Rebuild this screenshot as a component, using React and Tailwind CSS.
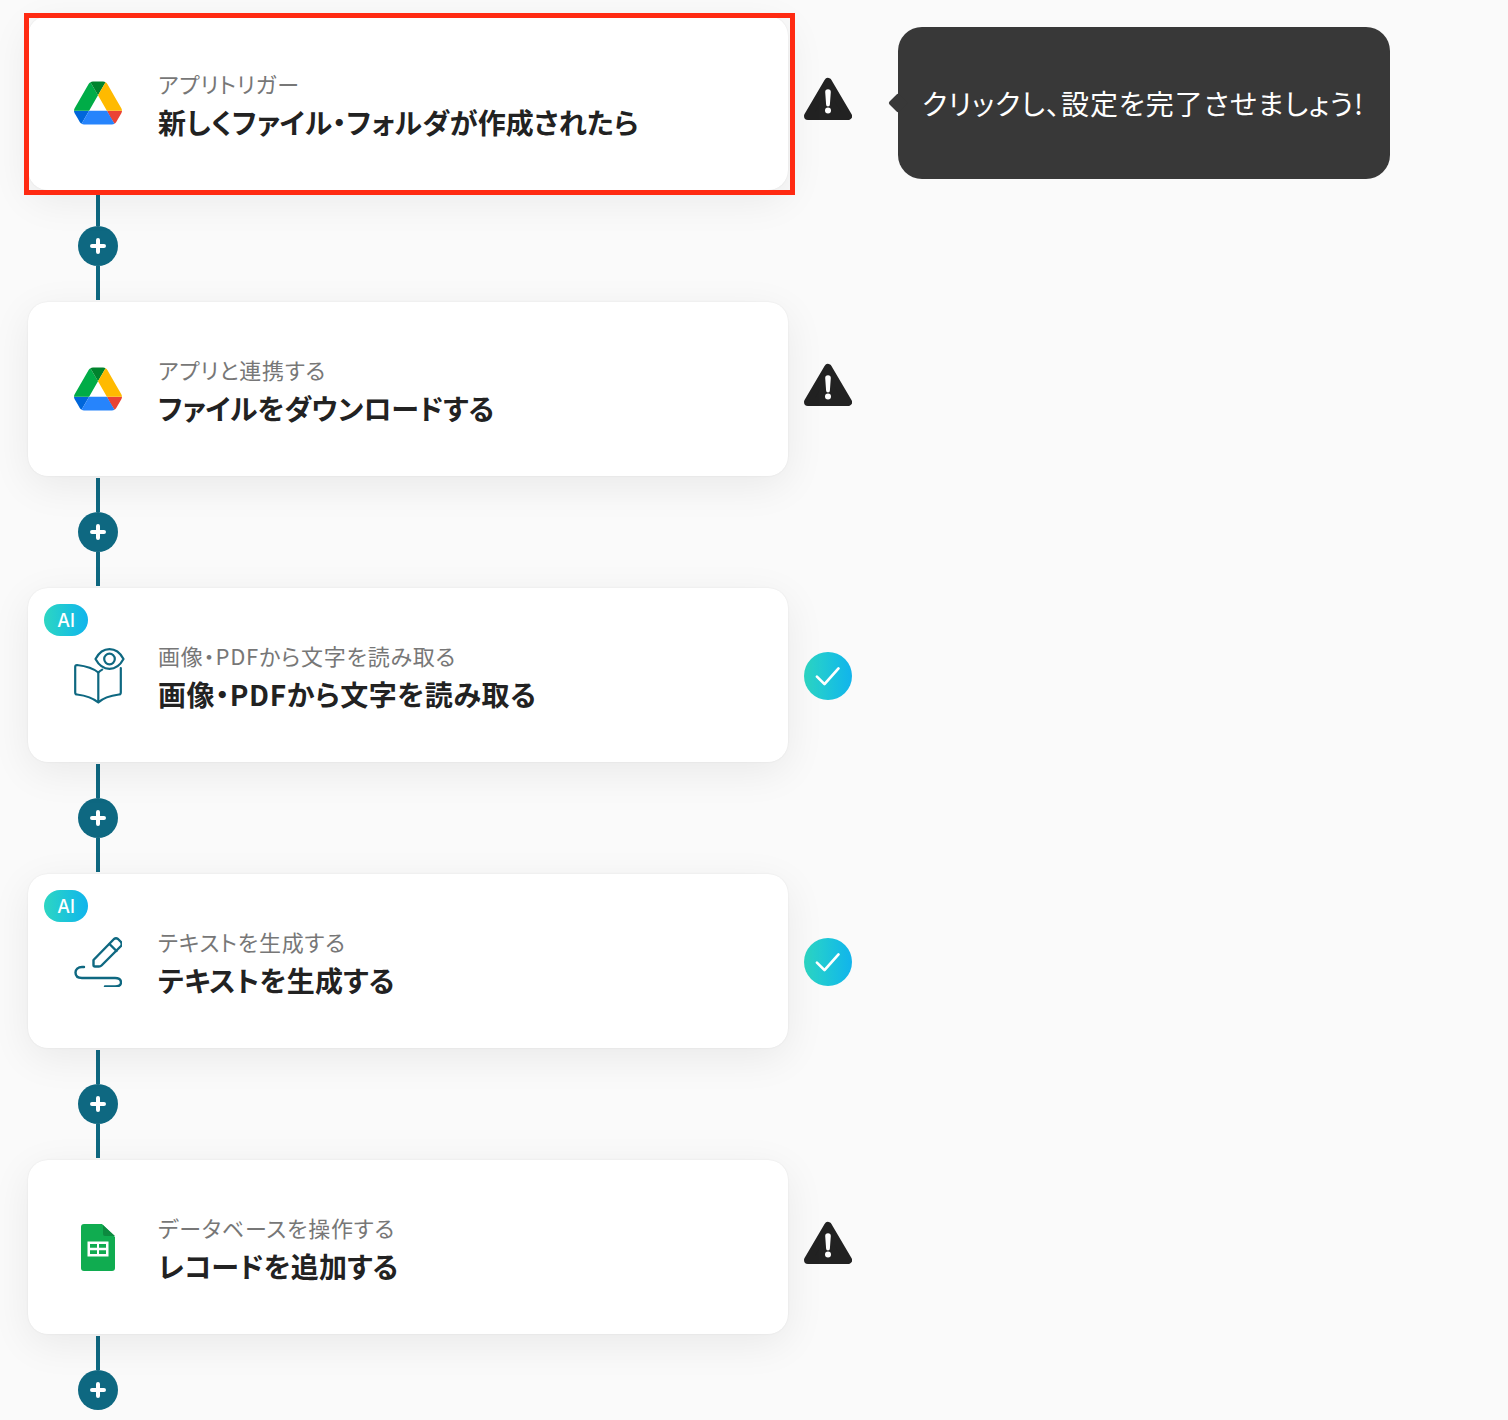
const fontFamily = "font-['Noto_Sans_CJK_JP','Noto_Sans',sans-serif]";

const DriveIcon = () => (
  <svg viewBox="0 0 87.3 78" className="w-[49px] h-[44px]">
    <path d="m6.6 66.85 3.85 6.65c.8 1.4 1.95 2.5 3.3 3.3l13.75-23.8h-27.5c0 1.55.4 3.1 1.2 4.5z" fill="#0066da" />
    <path d="m43.65 25-13.75-23.8c-1.35.8-2.5 1.9-3.3 3.3l-25.4 44a9.06 9.06 0 0 0 -1.2 4.5h27.5z" fill="#00ac47" />
    <path d="m73.55 76.8c1.35-.8 2.5-1.9 3.3-3.3l1.6-2.75 7.65-13.25c.8-1.4 1.2-2.95 1.2-4.5h-27.502l5.852 11.5z" fill="#ea4335" />
    <path d="m43.65 25 13.75-23.8c-1.35-.8-2.9-1.2-4.5-1.2h-18.5c-1.6 0-3.15.45-4.5 1.2z" fill="#00832d" />
    <path d="m59.8 53h-32.3l-13.75 23.8c1.35.8 2.9 1.2 4.5 1.2h50.8c1.6 0 3.15-.45 4.5-1.2z" fill="#2684fc" />
    <path d="m73.4 26.5-12.7-22c-.8-1.4-1.95-2.5-3.3-3.3l-13.75 23.8 16.15 28h27.45c0-1.55-.4-3.1-1.2-4.5z" fill="#ffba00" />
  </svg>
);

const BookEyeIcon = () => (
  <svg viewBox="0 0 48 56" className="w-[48px] h-[56px] overflow-visible" fill="none" stroke="#0e6881" strokeWidth="2.2" strokeLinecap="round" strokeLinejoin="round">
    <path d="M24.3 55.5 V25.5 C19 21 11 19 3 18 Q1.2 18 1.2 20 V45.5 Q1.2 47.5 3 47.5 C11 48.5 19 51 24.3 55.5 C29 51 37 48.5 45 47.5 Q46.8 47.5 46.8 45.5 V21" />
    <path d="M24.3 25.5 C25.5 24.3 26.8 23.4 28.2 22.6" />
    <path d="M21.5 12 C25 5.5 30 2.2 35.5 2.2 C41 2.2 46 5.5 49.5 12 C46 18.5 41 21.8 35.5 21.8 C30 21.8 25 18.5 21.5 12 Z" />
    <circle cx="35.5" cy="12" r="5.3" />
  </svg>
);

const PenIcon = () => (
  <svg viewBox="0 0 48 52" className="w-[48px] h-[52px]" fill="none" stroke="#0e6881" strokeWidth="2.4" strokeLinecap="round" strokeLinejoin="round">
    <path d="M19.5 25 L40 4 Q42 2.5 44 4 L47 7 Q48.5 9 47 11 L27.5 30.5 Q26.5 31.5 25 31.5 H21 Q19.5 31.5 19.5 30 Z" />
    <path d="M35.5 9 L42.5 16" />
    <path d="M10 32 H8 C4 32 1.5 34.5 1.5 37.5 C1.5 41 4 43 8 43 H41 C45 43 47 45 47 47.5 C47 50 45 51.5 41 51.5 H31" />
  </svg>
);

const SheetsIcon = () => (
  <svg viewBox="0 0 34 47" className="w-[34px] h-[47px]">
    <path d="M21 0 H3 Q0 0 0 3 V44 Q0 47 3 47 H31 Q34 47 34 44 V13 Z" fill="#10ac50" />
    <path d="M22 1 L34 12 H24 Q22 12 22 10 Z" fill="#0c8a3f" />
    <path d="M6.5 17.5 H27.5 V32.5 H6.5 Z M9 20 V23.8 H16 V20 Z M18 20 V23.8 H25 V20 Z M9 26.2 V30 H16 V26.2 Z M18 26.2 V30 H25 V26.2 Z" fill="#fff" fillRule="evenodd" />
  </svg>
);

const WarningIcon = () => (
  <svg viewBox="0 0 48 48" className="w-12 h-12">
    <path d="M24 7 L44 41 H4 Z" fill="#222222" stroke="#222222" strokeWidth="8" strokeLinejoin="round" />
    <path d="M21.2 17 a2.8 2.8 0 0 1 5.6 0 l-.9 12.5 a1.9 1.9 0 0 1 -3.8 0 Z" fill="#fff" />
    <circle cx="24" cy="35.5" r="3" fill="#fff" />
  </svg>
);

const CheckIcon = () => (
  <div className="w-12 h-12 rounded-full bg-gradient-to-r from-[#2dd6c2] to-[#12b4ec] flex items-center justify-center">
    <svg viewBox="0 0 24 24" className="w-7 h-7" fill="none" stroke="#fff" strokeWidth="2.3" strokeLinecap="round" strokeLinejoin="round">
      <path d="M2.5 12.5 L9 19 L21 5.5" />
    </svg>
  </div>
);

const Connector = ({ last }) => (
  <div className="flex flex-col items-center w-10 ml-[50px] my-[2px]">
    <div className="w-1 h-[34px] bg-[#0e6881]" />
    <div className="w-10 h-10 rounded-full bg-[#0e6881] flex items-center justify-center">
      <svg viewBox="0 0 16 16" className="w-4 h-4" fill="none" stroke="#fff" strokeWidth="4" strokeLinecap="round">
        <path d="M8 2 V14 M2 8 H14" />
      </svg>
    </div>
    {!last && <div className="w-1 h-[34px] bg-[#0e6881]" />}
  </div>
);

const steps = [
  { icon: <DriveIcon />, sub: "アプリトリガー", title: "新しくファイル・フォルダが作成されたら", spacing: "tracking-[0.15px]", status: "warn", selected: true },
  { icon: <DriveIcon />, sub: "アプリと連携する", title: "ファイルをダウンロードする", spacing: "tracking-[-0.1px]", status: "warn" },
  { icon: <BookEyeIcon />, sub: "画像・PDFから文字を読み取る", title: "画像・PDFから文字を読み取る", spacing: "tracking-[0.6px]", status: "ok", ai: true },
  { icon: <PenIcon />, sub: "テキストを生成する", title: "テキストを生成する", spacing: "tracking-[0.25px]", status: "ok", ai: true },
  { icon: <SheetsIcon />, sub: "データベースを操作する", title: "レコードを追加する", spacing: "tracking-[0.15px]", status: "warn" },
];

const StepCard = ({ step }) => (
  <div className="relative w-[760px] h-[174px] bg-white rounded-[20px] shadow-[0_10px_40px_rgba(0,0,0,0.07),0_0_2px_rgba(0,0,0,0.08)] flex items-center pl-[46px]">
    {step.ai && (
      <div className="absolute left-4 top-4 w-11 h-8 rounded-full bg-gradient-to-r from-[#2dd6c2] to-[#12b4ec] flex items-center justify-center text-white text-[18px] font-medium font-['Inter',sans-serif]">
        AI
      </div>
    )}
    <div className="w-12 flex justify-center shrink-0">{step.icon}</div>
    <div className="ml-9 pt-[2px] flex flex-col [font-feature-settings:'palt']">
      <div className="text-[22px] leading-[32px] tracking-[0.8px] text-[#777777]">{step.sub}</div>
      <div className={`mt-[3px] text-[28px] leading-[40px] font-bold text-[#222222] ${step.spacing}`}>{step.title}</div>
    </div>
    {step.selected && (
      <div className="absolute left-[-4px] top-[-3px] w-[771px] h-[182px] border-[5px] border-[#ff2a12]" />
    )}
  </div>
);

export default function App() {
  return (
    <div className={`relative w-[1508px] h-[1420px] overflow-hidden bg-[#fafafa] pt-4 pl-7 ${fontFamily}`}>
      {steps.map((step, i) => (
        <div key={i}>
          <div className="flex items-center">
            <StepCard step={step} />
            {step.status === "warn" ? (
              <div className="ml-4 mb-2"><WarningIcon /></div>
            ) : (
              <div className="ml-4 mt-[2px]"><CheckIcon /></div>
            )}
          </div>
          <Connector last={i === steps.length - 1} />
        </div>
      ))}
      {/* tooltip next to the first step */}
      <div className="absolute left-[898px] top-[27px] w-[492px] h-[152px] rounded-[24px] bg-[#383838] flex items-center pl-6 text-white text-[28px] tracking-[1px] [font-feature-settings:'palt']">
        <div className="absolute left-[-7px] top-[69px] w-[14px] h-[14px] rotate-45 bg-[#383838] rounded-[2px]" />
        <span className="relative whitespace-nowrap">クリックし、設定を完了させましょう!</span>
      </div>
    </div>
  );
}
